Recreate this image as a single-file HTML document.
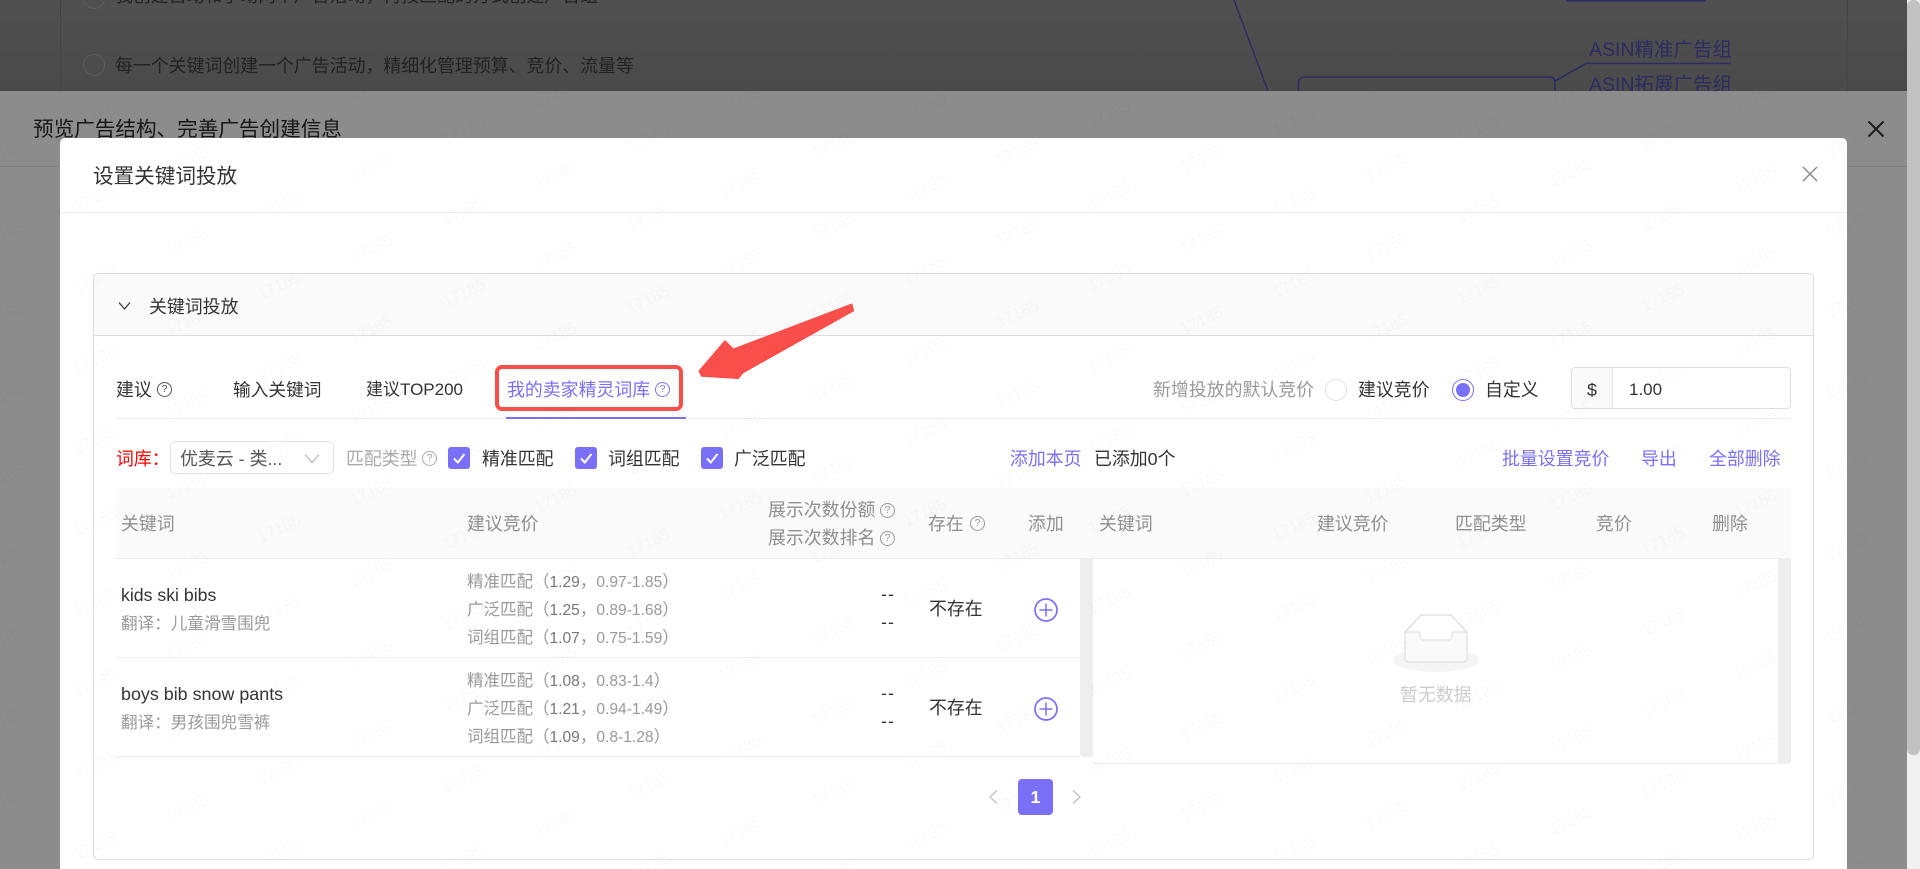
<!DOCTYPE html>
<html lang="zh-CN">
<head>
<meta charset="utf-8">
<title>设置关键词投放</title>
<style>
html,body{margin:0;padding:0;width:1920px;height:869px;overflow:hidden;background:#8c8c8c;}
body{position:relative;font-family:"Liberation Sans","Noto Sans CJK SC",sans-serif;color:#333;}
div{box-sizing:border-box;}
.a{position:absolute;}
.t{position:absolute;white-space:nowrap;font-size:17.9px;line-height:24px;height:24px;color:#333;}
.g{color:#999;}
.l{color:#7a70f7;}
.s{font-size:16.6px;}
.h{color:#8f8f8f;}
.q{position:absolute;width:15px;height:15px;border:1px solid #999;border-radius:50%;font-size:10.5px;line-height:13px;text-align:center;color:#999;}
.cb{position:absolute;top:447px;width:22px;height:22px;background:#7a70f7;border-radius:3px;}
.bid{color:#999;font-size:16.5px;}
.bid b{font-weight:normal;color:#777;font-size:15.6px;}
.bid i{font-style:normal;font-size:15.6px;}
.dash{font-size:17.9px;letter-spacing:1px;}
</style>
</head>
<body>

<!-- dimmed base page -->
<div class="a" style="left:0;top:0;width:1907px;height:91px;background:linear-gradient(#505050,#4a4a4a);overflow:hidden;">
  <div class="a" style="left:60px;top:0;width:1px;height:91px;background:#444;"></div>
  <div class="a" style="left:1847px;top:0;width:1px;height:91px;background:#444;"></div>
  <div class="a" style="left:83px;top:54px;width:22px;height:22px;border:1px solid #5e5e5e;border-radius:50%;"></div>
  <div class="a" style="left:83px;top:-13px;width:22px;height:22px;border:1px solid #5e5e5e;border-radius:50%;"></div>
  <div class="t" style="left:115px;top:-16px;color:#222;">我创建自动和手动两个广告活动，再按匹配的方式创建广告组</div>
  <div class="t" style="left:115px;top:54px;color:#222;">每一个关键词创建一个广告活动，精细化管理预算、竞价、流量等</div>
  <svg class="a" style="left:0;top:0;" width="1907" height="91">
    <path d="M1234 0 L1268 91" stroke="#2e2a62" stroke-width="1.4" fill="none"/>
    <path d="M1566 0.5 H1706" stroke="#2e2a62" stroke-width="2" fill="none"/>
    <path d="M1731 63.5 H1586 L1555 81" stroke="#2e2a62" stroke-width="1.6" fill="none"/>
    <path d="M1298.5 92 V83 Q1298.5 77 1305 77 H1549 Q1555 77 1555 83 V92" stroke="#2e2a62" stroke-width="1.6" fill="none"/>
  </svg>
  <div class="t" style="left:1589px;top:38px;color:#2e2a62;font-size:19.5px;">ASIN精准广告组</div>
  <div class="t" style="left:1589px;top:73px;color:#2e2a62;font-size:19.5px;">ASIN拓展广告组</div>
</div>

<!-- drawer -->
<div class="a" style="left:0;top:91px;width:1907px;height:778px;background:#8c8c8c;"></div>
<div class="a" style="left:0;top:166px;width:1907px;height:1px;background:#7f7f7f;"></div>
<div class="t" style="left:33px;top:118px;font-size:20.6px;color:#161616;">预览广告结构、完善广告创建信息</div>
<svg class="a" style="left:1867px;top:120px;" width="18" height="18"><path d="M1.5 1.5 L16.5 16.5 M16.5 1.5 L1.5 16.5" stroke="#1c1c1c" stroke-width="2" fill="none"/></svg>

<!-- scrollbar -->
<div class="a" style="left:1907px;top:0;width:13px;height:869px;background:#f1f1f1;"></div>
<div class="a" style="left:1907px;top:0;width:13px;height:755px;background:#c1c1c1;border-radius:6px;"></div>

<!-- modal -->
<div class="a" style="left:60px;top:138px;width:1787px;height:731px;background:#fff;border-radius:5px 5px 0 0;"></div>
<div class="t" style="left:93px;top:165px;font-size:20.6px;color:#333;">设置关键词投放</div>
<div class="a" style="left:60px;top:212px;width:1787px;height:1px;background:#eee;"></div>
<svg class="a" style="left:1802px;top:166px;" width="16" height="16"><path d="M1 1 L15 15 M15 1 L1 15" stroke="#8a8a8a" stroke-width="1.5" fill="none"/></svg>

<!-- card -->
<div class="a" style="left:93px;top:273px;width:1721px;height:587px;border:1px solid #ddd;border-radius:5px;background:#fff;"></div>
<div class="a" style="left:94px;top:274px;width:1719px;height:62px;background:#fafafa;border-bottom:1px solid #ddd;border-radius:4px 4px 0 0;"></div>
<svg class="a" style="left:118px;top:301px;" width="13" height="10"><path d="M1 1.5 L6.5 8 L12 1.5" stroke="#333" stroke-width="1.2" fill="none"/></svg>
<div class="t" style="left:149px;top:295px;">关键词投放</div>

<!-- tabs -->
<div class="t" style="left:116px;top:378px;">建议</div>
<div class="q" style="left:157px;top:382px;border-color:#555;color:#555;">?</div>
<div class="t" style="left:233px;top:378px;font-size:17.7px;">输入关键词</div>
<div class="t" style="left:366px;top:378px;font-size:17px;">建议TOP200</div>
<div class="t l" style="left:507px;top:378px;">我的卖家精灵词库</div>
<div class="q" style="left:655px;top:382px;border-color:#7a70f7;color:#7a70f7;">?</div>
<div class="a" style="left:116px;top:418px;width:1675px;height:1px;background:#eee;"></div>
<div class="a" style="left:506px;top:417px;width:180px;height:2px;background:#7a70f7;"></div>
<div class="a" style="left:495px;top:365px;width:188px;height:46px;border:4.5px solid #f94f4b;border-radius:7px;"></div>
<svg class="a" style="left:0;top:0;" width="900" height="400">
  <path d="M851.7 304.3 L733.3 349.3 L725 341 L699.3 371 L701.7 376 L738.3 378.3 L742.7 372.7 L853.3 310.7 Z" fill="#f94f4b" stroke="#f94f4b" stroke-width="1.5" stroke-linejoin="round"/>
</svg>

<div class="t g" style="left:1153px;top:378px;">新增投放的默认竞价</div>
<div class="a" style="left:1325px;top:379px;width:22px;height:22px;border:1px solid #ddd;border-radius:50%;background:#fff;"></div>
<div class="t" style="left:1358px;top:378px;">建议竞价</div>
<div class="a" style="left:1452px;top:379px;width:22px;height:22px;border:1px solid #7a70f7;border-radius:50%;background:#fff;"></div>
<div class="a" style="left:1456px;top:383px;width:14px;height:14px;border-radius:50%;background:#7a70f7;"></div>
<div class="t" style="left:1485px;top:378px;">自定义</div>
<div class="a" style="left:1571px;top:367px;width:220px;height:42px;border:1px solid #ddd;border-radius:4px;background:#fff;"></div>
<div class="a" style="left:1572px;top:368px;width:41px;height:40px;background:#fafafa;border-right:1px solid #e5e5e5;border-radius:3px 0 0 3px;"></div>
<div class="t" style="left:1587px;top:378px;">$</div>
<div class="t" style="left:1629px;top:378px;font-size:17px;">1.00</div>

<!-- filter row -->
<div class="t" style="left:116px;top:447px;color:#f00;">词库：</div>
<div class="a" style="left:170px;top:441px;width:164px;height:33px;border:1px solid #e2e2e2;border-radius:5px;background:#fff;"></div>
<div class="t" style="left:180px;top:447px;color:#555;">优麦云 - 类...</div>
<svg class="a" style="left:304px;top:453px;" width="16" height="11"><path d="M1 1.5 L8 9.5 L15 1.5" stroke="#bbb" stroke-width="1.3" fill="none"/></svg>
<div class="t" style="left:346px;top:447px;color:#aaa;">匹配类型</div>
<div class="q" style="left:422px;top:451px;border-color:#aab;color:#99a;">?</div>

<div class="cb" style="left:448px;"></div>
<svg class="a" style="left:448px;top:447px;" width="22" height="22"><path d="M6 11.5 L9.8 15.5 L16.5 7" stroke="#fff" stroke-width="2" fill="none"/></svg>
<div class="t" style="left:482px;top:447px;">精准匹配</div>
<div class="cb" style="left:575px;"></div>
<svg class="a" style="left:575px;top:447px;" width="22" height="22"><path d="M6 11.5 L9.8 15.5 L16.5 7" stroke="#fff" stroke-width="2" fill="none"/></svg>
<div class="t" style="left:608px;top:447px;">词组匹配</div>
<div class="cb" style="left:701px;"></div>
<svg class="a" style="left:701px;top:447px;" width="22" height="22"><path d="M6 11.5 L9.8 15.5 L16.5 7" stroke="#fff" stroke-width="2" fill="none"/></svg>
<div class="t" style="left:734px;top:447px;">广泛匹配</div>

<div class="t l" style="left:1010px;top:447px;">添加本页</div>
<div class="t" style="left:1094px;top:447px;">已添加0个</div>
<div class="t l" style="left:1502px;top:447px;">批量设置竞价</div>
<div class="t l" style="left:1641px;top:447px;">导出</div>
<div class="t l" style="left:1709px;top:447px;">全部删除</div>

<!-- table header -->
<div class="a" style="left:116px;top:488px;width:1675px;height:71px;background:#fafafa;border-bottom:1px solid #eee;"></div>
<div class="t h" style="left:121px;top:512px;">关键词</div>
<div class="t h" style="left:467px;top:512px;">建议竞价</div>
<div class="t h" style="left:768px;top:498px;">展示次数份额</div>
<div class="q" style="left:880px;top:503px;">?</div>
<div class="t h" style="left:768px;top:526px;">展示次数排名</div>
<div class="q" style="left:880px;top:531px;">?</div>
<div class="t h" style="left:928px;top:512px;">存在</div>
<div class="q" style="left:970px;top:516px;">?</div>
<div class="t h" style="left:1028px;top:512px;">添加</div>
<div class="t h" style="left:1099px;top:512px;">关键词</div>
<div class="t h" style="left:1317px;top:512px;">建议竞价</div>
<div class="t h" style="left:1455px;top:512px;">匹配类型</div>
<div class="t h" style="left:1596px;top:512px;">竞价</div>
<div class="t h" style="left:1712px;top:512px;">删除</div>

<!-- left table -->
<div class="a" style="left:116px;top:657px;width:964px;height:1px;background:#eee;"></div>
<div class="a" style="left:116px;top:756px;width:964px;height:1px;background:#eee;"></div>
<div class="a" style="left:1080px;top:559px;width:13px;height:198px;background:#eee;border-radius:0 0 3px 3px;"></div>

<div class="t" style="left:121px;top:583px;font-size:17.7px;">kids ski bibs</div>
<div class="t g s" style="left:121px;top:612px;">翻译：儿童滑雪围兜</div>
<div class="t bid" style="left:467px;top:570px;">精准匹配（<b>1.29</b>，<i>0.97-1.85</i>）</div>
<div class="t bid" style="left:467px;top:598px;">广泛匹配（<b>1.25</b>，<i>0.89-1.68</i>）</div>
<div class="t bid" style="left:467px;top:626px;">词组匹配（<b>1.07</b>，<i>0.75-1.59</i>）</div>
<div class="t dash" style="left:881px;top:582px;">--</div>
<div class="t dash" style="left:881px;top:610px;">--</div>
<div class="t" style="left:929px;top:597px;">不存在</div>
<svg class="a" style="left:1033px;top:597px;" width="26" height="26"><circle cx="13" cy="13" r="11" stroke="#7a70f7" stroke-width="1.7" fill="none"/><path d="M13 6.5 V19.5 M6.5 13 H19.5" stroke="#7a70f7" stroke-width="1.5"/></svg>

<div class="t" style="left:121px;top:682px;font-size:17.9px;">boys bib snow pants</div>
<div class="t g s" style="left:121px;top:711px;">翻译：男孩围兜雪裤</div>
<div class="t bid" style="left:467px;top:669px;">精准匹配（<b>1.08</b>，<i>0.83-1.4</i>）</div>
<div class="t bid" style="left:467px;top:697px;">广泛匹配（<b>1.21</b>，<i>0.94-1.49</i>）</div>
<div class="t bid" style="left:467px;top:725px;">词组匹配（<b>1.09</b>，<i>0.8-1.28</i>）</div>
<div class="t dash" style="left:881px;top:681px;">--</div>
<div class="t dash" style="left:881px;top:709px;">--</div>
<div class="t" style="left:929px;top:696px;">不存在</div>
<svg class="a" style="left:1033px;top:696px;" width="26" height="26"><circle cx="13" cy="13" r="11" stroke="#7a70f7" stroke-width="1.7" fill="none"/><path d="M13 6.5 V19.5 M6.5 13 H19.5" stroke="#7a70f7" stroke-width="1.5"/></svg>

<!-- right table -->
<div class="a" style="left:1093px;top:763px;width:685px;height:1px;background:#eee;"></div>
<div class="a" style="left:1778px;top:559px;width:13px;height:205px;background:#eee;border-radius:0 0 3px 3px;"></div>
<svg class="a" style="left:1390px;top:610px;" width="92" height="70">
  <ellipse cx="46" cy="50" rx="43" ry="12" fill="#f5f5f5"/>
  <path d="M15 22 L31 5 H61 L77 22 V48 Q77 52 73 52 H19 Q15 52 15 48 Z" fill="#fafafa" stroke="#e0e0e0" stroke-width="1.3"/>
  <path d="M16 22 L31 5.6 H61 L76 22 H64 Q62 22 62 24 V26 Q62 30 58 30 H34 Q30 30 30 26 V24 Q30 22 28 22 Z" fill="#fff"/>
  <path d="M15 22 H28 Q30 22 30 24 V26 Q30 30 34 30 H58 Q62 30 62 26 V24 Q62 22 64 22 H77" fill="none" stroke="#e0e0e0" stroke-width="1.3"/>
  <path d="M15 22 L31 5 H61 L77 22" fill="none" stroke="#e0e0e0" stroke-width="1.3"/>
</svg>
<div class="t" style="left:1400px;top:683px;color:#ccc;">暂无数据</div>

<!-- pagination -->
<svg class="a" style="left:988px;top:789px;" width="11" height="16"><path d="M9 1.5 L2 8 L9 14.5" stroke="#c4c4c4" stroke-width="1.4" fill="none"/></svg>
<div class="a" style="left:1018px;top:779px;width:35px;height:36px;background:#7a70f7;border-radius:4px;color:#fff;font-size:17.5px;font-weight:bold;line-height:36px;text-align:center;">1</div>
<svg class="a" style="left:1071px;top:789px;" width="11" height="16"><path d="M2 1.5 L9 8 L2 14.5" stroke="#c4c4c4" stroke-width="1.4" fill="none"/></svg>

<!-- watermark -->
<svg class="a" style="left:0;top:91px;pointer-events:none;" width="1907" height="778" viewBox="0 91 1907 778">
  <defs>
    <pattern id="wm" patternUnits="userSpaceOnUse" width="184.5" height="81" patternTransform="translate(971 129.3) skewY(2.17)">
      <text x="46" y="26" text-anchor="middle" font-family="Liberation Sans, sans-serif" font-size="16.5" fill="#000" fill-opacity="0.018" transform="rotate(-27 46 20)">17185</text>
      <text x="138" y="66.5" text-anchor="middle" font-family="Liberation Sans, sans-serif" font-size="16.5" fill="#000" fill-opacity="0.018" transform="rotate(-27 138 60.5)">17185</text>
    </pattern>
  </defs>
  <rect x="0" y="91" width="1907" height="778" fill="url(#wm)"/>
</svg>
</body>
</html>
